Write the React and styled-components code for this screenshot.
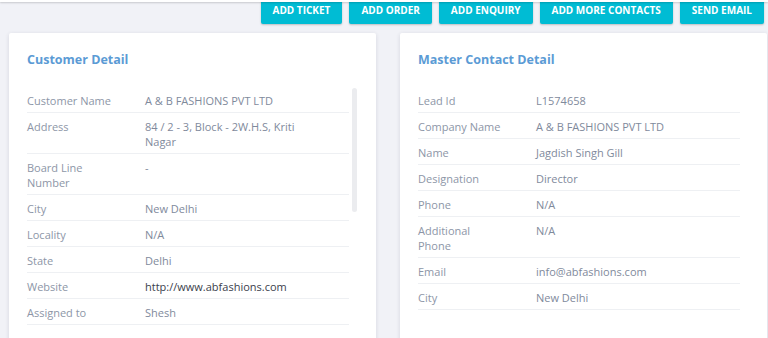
import React from 'react'
import styled, { createGlobalStyle } from 'styled-components'

const GlobalStyle = createGlobalStyle`
  html, body {
    margin: 0;
    padding: 0;
    background: #f1f2f7;
    font-family: "Open Sans", "Noto Sans", sans-serif;
    overflow: hidden;
  }
  * { box-sizing: border-box; }
`

const TopBar = styled.div`
  position: relative;
  z-index: 2;
  height: 2px;
  background: #ffffff;
  box-shadow: 0 1px 2px rgba(0, 0, 0, 0.18);
`

const Toolbar = styled.div`
  display: flex;
  justify-content: flex-end;
  gap: 7px;
  padding-right: 4px;
  margin-top: -6px;
`

const ActionButton = styled.button`
  height: 28px;
  padding: 0 12px;
  border: 0;
  border-radius: 2px;
  background: #00bcd4;
  color: #ffffff;
  font-family: inherit;
  font-size: 10px;
  font-weight: 700;
  box-shadow: 0 1px 2px rgba(0, 0, 0, 0.22);
  cursor: pointer;
`

const Content = styled.div`
  display: grid;
  grid-template-columns: 367px 367px;
  column-gap: 24px;
  padding: 9px 0 0 9px;
`

const Card = styled.div`
  position: relative;
  background: #ffffff;
  border-radius: 2px;
  box-shadow: 0 1px 4px rgba(40, 50, 70, 0.14);
  padding: 18px 27px 40px 18px;
  min-height: 340px;
`

const CardTitle = styled.h3`
  margin: 0 0 18px;
  font-size: 12.5px;
  line-height: 18px;
  font-weight: 700;
  color: #5b9bd5;
`

const Row = styled.div`
  display: flex;
  padding: 6px 0 4px;
  border-bottom: 1px solid #eef0f3;
  font-size: 11px;
  line-height: 15px;
`

const Label = styled.div`
  flex: 0 0 118px;
  padding-right: 33px;
  color: #8d96a7;
`

const Value = styled.div`
  flex: 0 0 170px;
  color: ${p => (p.$dark ? '#3b414c' : '#7f8a9c')};
`

const ScrollThumb = styled.div`
  position: absolute;
  top: 55px;
  right: 19px;
  width: 5px;
  height: 124px;
  border-radius: 3px;
  background: #ebecef;
`

const customer = [
  ['Customer Name', 'A & B FASHIONS PVT LTD'],
  ['Address', '84 / 2 - 3, Block - 2W.H.S, Kriti Nagar'],
  ['Board Line Number', '-'],
  ['City', 'New Delhi'],
  ['Locality', 'N/A'],
  ['State', 'Delhi'],
  ['Website', 'http://www.abfashions.com', true],
  ['Assigned to', 'Shesh'],
]

const contact = [
  ['Lead Id', 'L1574658'],
  ['Company Name', 'A & B FASHIONS PVT LTD'],
  ['Name', 'Jagdish Singh Gill'],
  ['Designation', 'Director'],
  ['Phone', 'N/A'],
  ['Additional Phone', 'N/A'],
  ['Email', 'info@abfashions.com'],
  ['City', 'New Delhi'],
]

function DetailCard({ title, rows, scroll }) {
  return (
    <Card>
      <CardTitle>{title}</CardTitle>
      {rows.map(([label, value, dark]) => (
        <Row key={label}>
          <Label>{label}</Label>
          <Value $dark={dark}>{value}</Value>
        </Row>
      ))}
      {scroll && <ScrollThumb />}
    </Card>
  )
}

export default function App() {
  return (
    <>
      <GlobalStyle />
      <TopBar />
      <Toolbar>
        <ActionButton>ADD TICKET</ActionButton>
        <ActionButton>ADD ORDER</ActionButton>
        <ActionButton>ADD ENQUIRY</ActionButton>
        <ActionButton>ADD MORE CONTACTS</ActionButton>
        <ActionButton>SEND EMAIL</ActionButton>
      </Toolbar>
      <Content>
        <DetailCard title="Customer Detail" rows={customer} scroll />
        <DetailCard title="Master Contact Detail" rows={contact} />
      </Content>
    </>
  )
}
